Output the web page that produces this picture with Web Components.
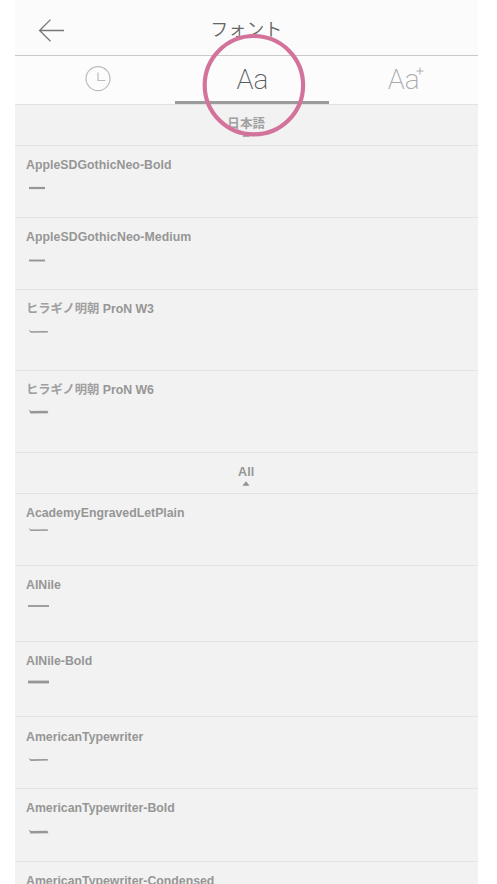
<!DOCTYPE html>
<html lang="ja">
<head>
<meta charset="utf-8">
<title>フォント</title>
<style>
html,body{margin:0;background:#fff}
body{width:497px;height:884px;overflow:hidden;font-family:"Liberation Sans","Noto Sans CJK JP",sans-serif;color:#969696}
</style>
</head>
<body>
<font-picker></font-picker>
<script>
const define=(name,html,setup)=>customElements.define(name,class extends HTMLElement{
  connectedCallback(){
    if(this.shadowRoot)return;
    const t=document.createElement('template');
    t.innerHTML=html;
    this.attachShadow({mode:'open'}).append(t.content.cloneNode(true));
    if(setup)setup(this,this.shadowRoot);
  }
});

define('title-bar',`<style>
:host{display:grid;grid-template-columns:74px 1fr 74px;height:56px;box-sizing:border-box;border-bottom:1px solid #c9c9c9;background:#fbfbfb}
svg{display:block;margin:18px 0 0 23px}
h1{margin:0;padding-top:15px;text-align:center;font:350 18px/26px "Noto Sans CJK JP",sans-serif;color:#666}
</style>
<svg width="28" height="26" fill="none" stroke="#777" stroke-width="1.3"><path d="M26 12.5H2M12.5 1.6 1.6 12.5 12.5 23.2"/></svg>
<h1><slot></slot></h1>`);

define('font-tab',`<style>
:host{display:block;box-sizing:border-box;height:48px;text-align:center;font:200 28px/32px Roboto,sans-serif;color:#aaa;padding-top:8px}
:host([active]){color:#5c5c5c;border-bottom:3px solid #9b9b9b;padding-left:1px}
.in{display:inline-block;position:relative}
.plus{position:absolute;left:28px;top:3px;display:none}
:host([plus]) .plus{display:block}
</style><span class="in"><slot></slot><svg class="plus" width="8" height="8" stroke="#aaa" stroke-width="1"><path d="M4 .5v7M.5 4h7"/></svg></span>`);

define('clock-icon',`<style>:host{display:block}svg{display:block}</style>
<svg width="26" height="28" fill="none" stroke="#bbb" stroke-width="1.2"><circle cx="13" cy="14.6" r="12"/><path d="M13 8.5v8h7.5"/></svg>`);

define('section-head',`<style>
:host{display:flex;flex-direction:column;align-items:center;height:41px;box-sizing:border-box;border-bottom:1px solid #e2e2e2;font-weight:bold;font-size:12.5px;line-height:16px;letter-spacing:.2px;padding-top:11px}
svg{margin-top:1px}
</style><slot></slot><svg width="8" height="5"><path d="M4 .3 7.6 4.8H.4Z" fill="#929292"/></svg>`);

define('ja-text',`<style>:host{font-family:"Noto Sans CJK JP",sans-serif;font-weight:bold;color:#a0a0a0}</style><slot></slot>`);

define('font-row',`<style>
:host{display:block;position:relative;height:var(--h);box-sizing:border-box;border-bottom:1px solid #e4e4e4;padding:12px 0 0 11px}
.name{font-weight:bold;font-size:12.3px;line-height:14px;height:14px;white-space:nowrap;letter-spacing:var(--ls,0)}
:host([ja]){padding-top:11px}
svg{position:absolute;left:11px;top:0;overflow:visible}
</style><div class="name"><slot></slot></div><svg width="24" height="70" fill="#969696"><path/></svg>`,(h,r)=>{
  h.style.setProperty('--h',h.getAttribute('h')+'px');
  if(h.hasAttribute('ls'))h.style.setProperty('--ls',h.getAttribute('ls')+'px');
  const y=+h.getAttribute('y'),w=+h.getAttribute('w'),k=h.getAttribute('kind');
  const x0=k==='wide'?2:3,x1=k==='short'?19:23;
  r.querySelector('path').setAttribute('d',k==='brush'
    ?`M2.6 ${y-w/2-1.2}L5 ${y-w/2+.2}L21.5 ${y-w/2}L22.4 ${y+w/2}L4.6 ${y+w/2+.4}Z`
    :`M${x0} ${y-w/2}H${x1}V${y+w/2}H${x0}Z`);
});

define('highlight-ring',`<style>:host{position:absolute;left:187px;top:33px}svg{display:block}</style>
<svg width="104" height="104"><circle cx="51.9" cy="52.2" r="49.2" fill="none" stroke="#d3739b" stroke-width="4.2"/></svg>`);

define('font-picker',`<style>
:host{display:block;position:relative;width:462.5px;height:884px;margin-left:15px;background:#f2f2f2;overflow:hidden}
nav{display:grid;grid-template-columns:160px 154px 1fr;height:48px;background:#fcfcfc;border-bottom:1px solid #e2e2e2;box-sizing:content-box;margin-bottom:-1px}
font-tab:first-child{margin-left:6px}
font-tab:last-child{padding-left:1px}
section-head:first-of-type{height:42px}
</style>
<title-bar>フォント</title-bar>
<nav><font-tab><clock-icon></clock-icon></font-tab><font-tab active>Aa</font-tab><font-tab plus>Aa</font-tab></nav>
<section-head><ja-text>日本語</ja-text></section-head>
<font-row h="72" y="42" w="2.2" kind="short" ls=".03">AppleSDGothicNeo-Bold</font-row>
<font-row h="72" y="42.5" w="1.9" kind="short" ls=".06">AppleSDGothicNeo-Medium</font-row>
<font-row ja h="81" y="41.7" w="1.4" kind="brush"><ja-text>ヒラギノ明朝</ja-text> ProN W3</font-row>
<font-row ja h="82" y="41" w="2.4" kind="brush"><ja-text>ヒラギノ明朝</ja-text> ProN W6</font-row>
<section-head>All</section-head>
<font-row h="72" y="36" w="1.4" kind="brush">AcademyEngravedLetPlain</font-row>
<font-row h="76" y="40" w="1.8" kind="wide">AlNile</font-row>
<font-row h="75" y="40" w="2.8" kind="wide">AlNile-Bold</font-row>
<font-row h="72" y="42.8" w="1.4" kind="brush" style="padding-top:13px">AmericanTypewriter</font-row>
<font-row h="73" y="43" w="2.4" kind="brush">AmericanTypewriter-Bold</font-row>
<font-row h="73" y="43" w="1.3" kind="brush">AmericanTypewriter-Condensed</font-row>
<highlight-ring></highlight-ring>`);
</script>
</body>
</html>
